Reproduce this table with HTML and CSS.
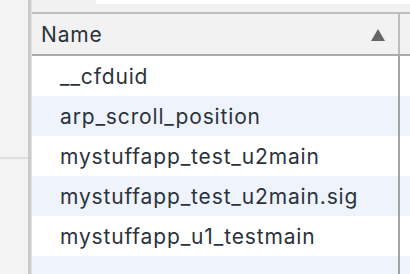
FILE: index.html
```html
<!DOCTYPE html>
<html lang="en">
<head>
    <meta charset="UTF-8">
    <meta name="viewport" content="width=device-width, initial-scale=1.0">
    <title>Cookies</title>
    <link rel="stylesheet" href="styles.css">
</head>
<body>
    <aside class="sidebar">
        <div class="sidebar-top"></div>
    </aside>
    <main class="panel">
        <div class="toolbar">
            <div class="filter"></div>
        </div>
        <div class="table">
            <div class="row head">
                <div class="cell name">
                    <span>Name</span>
                    <svg class="sort" width="14" height="12" viewBox="0 0 14 12"><polygon points="7,0 14,12 0,12" fill="#666"/></svg>
                </div>
                <div class="cell"></div>
            </div>
            <div class="row">
                <div class="cell name">__cfduid</div>
                <div class="cell"></div>
            </div>
            <div class="row alt">
                <div class="cell name">arp_scroll_position</div>
                <div class="cell"></div>
            </div>
            <div class="row">
                <div class="cell name">mystuffapp_test_u2main</div>
                <div class="cell"></div>
            </div>
            <div class="row alt">
                <div class="cell name">mystuffapp_test_u2main.sig</div>
                <div class="cell"></div>
            </div>
            <div class="row">
                <div class="cell name">mystuffapp_u1_testmain</div>
                <div class="cell"></div>
            </div>
            <div class="row alt">
                <div class="cell name"></div>
                <div class="cell"></div>
            </div>
        </div>
    </main>
</body>
</html>
```

FILE: styles.css
```css
body {
    margin: 0;
    height: 274px;
    overflow: hidden;
    display: flex;
    background-color: #f3f3f3;
    font-family: Inter, "Liberation Sans", sans-serif;
    color: #2b323b;
}
.sidebar {
    width: 28px;
    flex-shrink: 0;
    border-right: 3px solid #cbcbcb;
    box-shadow: 1px 0 0 #e2e2e2;
}
.sidebar-top {
    height: 157px;
    border-bottom: 2px solid #dedede;
}
.panel {
    flex: 1;
    margin-left: 1px;
    min-width: 0;
    display: flex;
    flex-direction: column;
}
.toolbar {
    height: 12px;
    flex-shrink: 0;
    background-color: #f1f1f1;
}
.filter {
    height: 4px;
    margin-left: 64px;
    background-color: #ffffff;
}
.table {
    flex: 1;
    min-height: 0;
    overflow: hidden;
    border-top: 2px solid #bdbdbd;
    background-color: #ffffff;
}
.row {
    display: grid;
    grid-template-columns: 368px 1fr;
    height: 40px;
}
.row.alt {
    background-color: #eff4fc;
}
.row.head {
    background-color: #f2f2f2;
    border-bottom: 2px solid #ababab;
}
.cell {
    display: flex;
    align-items: center;
    font-size: 21px;
    letter-spacing: 0.85px;
}
.cell.name {
    padding-left: 28px;
    border-right: 2px solid #a3a3a3;
}
.head .cell.name {
    padding-left: 9px;
    padding-right: 13px;
    justify-content: space-between;
    border-right-color: #bdbdbd;
}
.sort {
    margin-top: 1px;
}
```
